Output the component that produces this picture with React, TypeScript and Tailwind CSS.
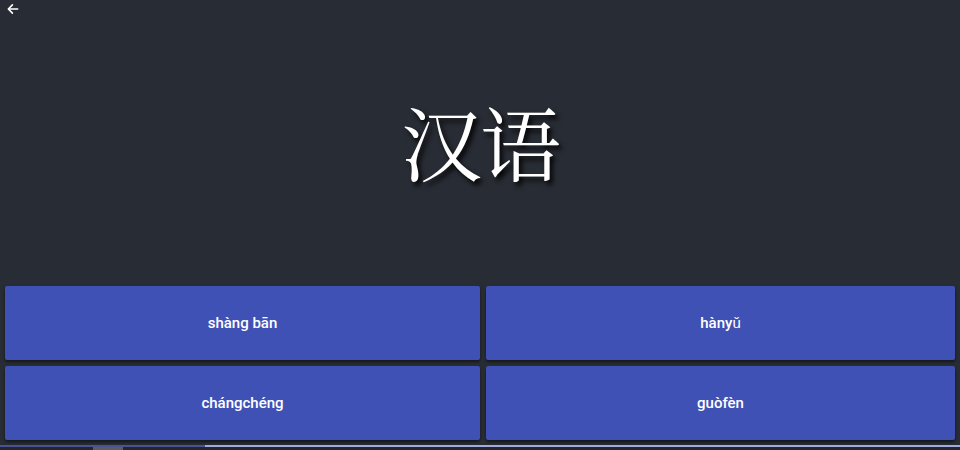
import React from 'react';

const choices = ['shàng bān', 'hànyǔ', 'chángchéng', 'guòfèn'];

const App = () => {
  return (
    <div className="w-[960px] h-[450px] bg-[#282c34] flex flex-col overflow-hidden">
      {/* Header */}
      <div className="h-[18px] flex items-start px-[6px] pt-[2px]">
        <button className="text-white">
          <svg width="14" height="14" viewBox="0 0 24 24" fill="none" stroke="currentColor" strokeWidth="2.8" strokeLinecap="round" strokeLinejoin="round">
            <path d="M20 12H5" />
            <path d="M11 5l-7 7 7 7" />
          </svg>
        </button>
      </div>

      {/* Question */}
      <div className="h-[263px] flex items-center justify-center pb-[18px]">
        <div
          className="text-white text-[81px] leading-none tracking-[-2px] [text-shadow:3px_4px_5px_rgba(0,0,0,0.9)]"
          style={{ fontFamily: '"Noto Serif CJK SC", "Noto Sans CJK SC", serif' }}
        >
          汉语
        </div>
      </div>

      {/* Answers */}
      <div className="grid grid-cols-[475px_1fr] gap-[6px] pl-[5px] pr-[5px] py-[5px]">
        {choices.map((c) => (
          <button
            key={c}
            className="h-[74px] rounded-[2px] bg-[#3f51b5] text-white text-[15px] font-medium shadow-[0_2px_3px_rgba(0,0,0,0.5)] font-['Roboto',sans-serif]"
          >
            {c}
          </button>
        ))}
      </div>

      {/* Progress */}
      <div className="flex flex-col">
        <div className="flex h-[2px]">
          <div className="w-[205px] bg-[#4a5196]" />
          <div className="flex-1 bg-[#a3aade]" />
        </div>
        <div className="h-[3px] bg-[#23262d] flex">
          <div className="ml-[93px] w-[30px] bg-[#5a5d66]" />
        </div>
      </div>
    </div>
  );
};

export default App;
